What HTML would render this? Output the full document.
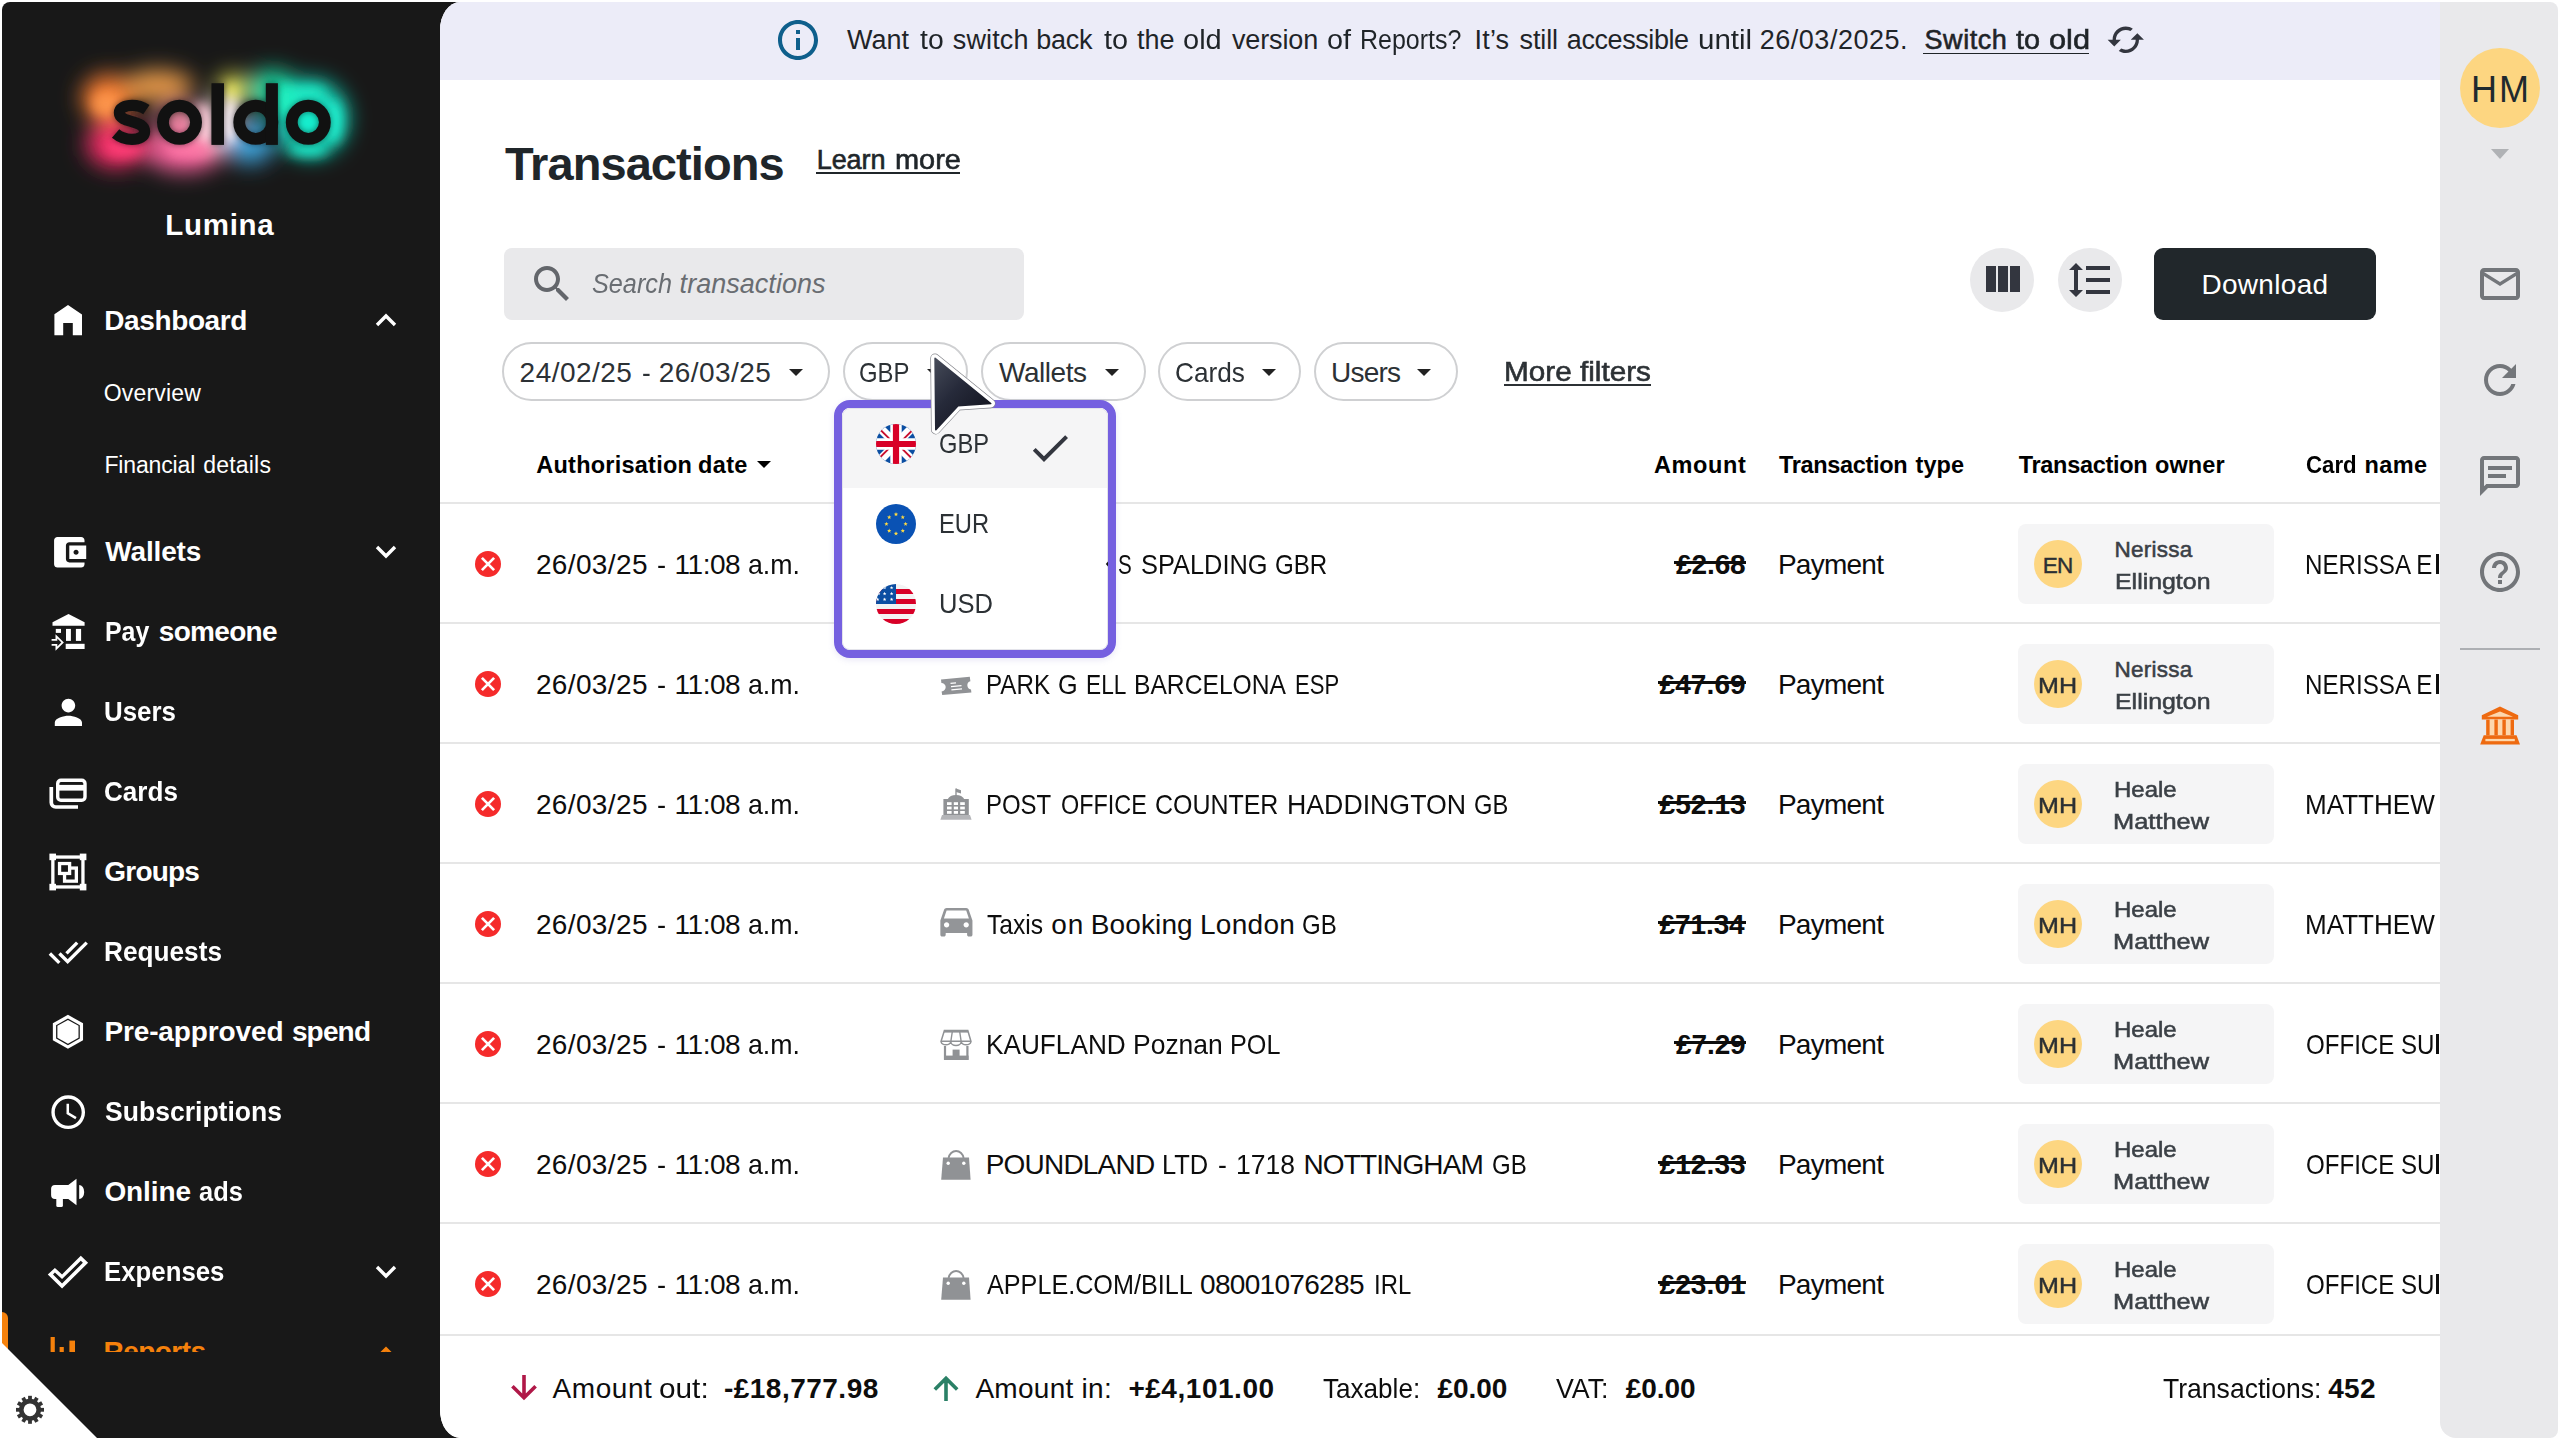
<!DOCTYPE html><html><head><meta charset="utf-8"><title>Transactions</title><style>
*{box-sizing:border-box;margin:0;padding:0}
html,body{width:2560px;height:1440px;overflow:hidden;background:#fff}
body{font-family:"Liberation Sans",sans-serif;position:relative;color:#111}
.t{position:absolute;white-space:pre}
.abs{position:absolute}
#side{position:absolute;left:2px;top:2px;width:470px;height:1436px;background:#181818;border-radius:8px 0 0 0;overflow:hidden}
#main{position:absolute;left:440px;top:2px;width:2000px;height:1436px;background:#fff;border-radius:20px 0 0 20px / 28px 0 0 28px;overflow:hidden}
#banner{position:absolute;left:0;top:0;width:2000px;height:78px;background:#ececf8}
#rail{position:absolute;left:2440px;top:2px;width:118px;height:1436px;background:#e9e9eb;border-radius:0 8px 8px 16px}
.hl{position:absolute;left:0;width:2000px;height:2px;background:#e6e6e6}
.chip{position:absolute;top:340.3px;height:59.2px;border:2px solid #cfd0d2;border-radius:30px;background:#fff}
.caret{position:absolute;width:0;height:0;border-left:7px solid transparent;border-right:7px solid transparent;border-top:7px solid #222}
.own{position:absolute;left:1578px;width:256px;height:80px;border-radius:8px;background:#f5f5f6}
.av{position:absolute;left:1594px;width:48px;height:48px;border-radius:50%;background:#fdd681}
.st{position:absolute;left:34px;width:28px;height:28px}
</style></head><body><div id="side"><svg class="abs" style="left:28px;top:18px" width="400" height="210" viewBox="30 20 400 210"><defs><filter id="lb" x="-30%" y="-30%" width="160%" height="160%"><feGaussianBlur stdDeviation="11"/></filter><filter id="ls" x="-30%" y="-30%" width="160%" height="160%"><feGaussianBlur stdDeviation="3"/></filter><filter id="lc" x="-50%" y="-50%" width="200%" height="200%"><feGaussianBlur stdDeviation="6"/></filter></defs><g filter="url(#lb)"><ellipse cx="108" cy="98" rx="26" ry="24" fill="#f57c30"/><ellipse cx="158" cy="86" rx="36" ry="16" fill="#e89a48"/><ellipse cx="116" cy="144" rx="30" ry="24" fill="#f02f66"/><ellipse cx="184" cy="150" rx="40" ry="22" fill="#f4609a"/><ellipse cx="180" cy="122" rx="22" ry="16" fill="#f58aa8"/><ellipse cx="220" cy="124" rx="18" ry="26" fill="#fde6ee"/><ellipse cx="232" cy="88" rx="14" ry="14" fill="#ecea50"/><ellipse cx="250" cy="142" rx="24" ry="22" fill="#3fa6de"/><ellipse cx="272" cy="90" rx="26" ry="20" fill="#1fd8a0"/><ellipse cx="311" cy="118" rx="36" ry="38" fill="#14eccc"/></g><g filter="url(#lc)" opacity="0.85"><ellipse cx="106" cy="104" rx="14" ry="12" fill="#ff9a50"/><ellipse cx="124" cy="148" rx="18" ry="10" fill="#ff3f78"/><ellipse cx="190" cy="150" rx="22" ry="8" fill="#ff7aa8"/><ellipse cx="200" cy="118" rx="8" ry="14" fill="#ffc0d0"/><ellipse cx="230" cy="120" rx="9" ry="22" fill="#fff4f8"/><ellipse cx="205" cy="124" rx="8" ry="16" fill="#ffd0dc"/><ellipse cx="232" cy="92" rx="7" ry="8" fill="#f4f060"/><ellipse cx="286" cy="100" rx="10" ry="16" fill="#20f0c0"/><ellipse cx="334" cy="122" rx="8" ry="22" fill="#20f4d4"/><ellipse cx="308" cy="150" rx="20" ry="6" fill="#20f4d4"/><ellipse cx="308" cy="92" rx="18" ry="6" fill="#20f0c8"/></g><g filter="url(#ls)" opacity="0.5"><g><path d="M146.4 109.6C142.6 107 137.6 105.3 132.2 105.3 124.6 105.3 119.4 108.2 119.4 112.8 119.4 118.2 125.4 119.8 132 121.6 138.6 123.4 144.6 125.4 144.6 131.4 144.6 136.4 139.6 139.4 132 139.4 125.6 139.4 119.8 137.2 115.6 133.6" fill="none" stroke="#111" stroke-width="11.2"/><circle cx="179.5" cy="122.3" r="16.55" fill="none" stroke="#111" stroke-width="11.9"/><rect x="211.4" y="83.2" width="12.6" height="61.7" fill="#111"/><circle cx="255.8" cy="122.3" r="16.55" fill="none" stroke="#111" stroke-width="11.9"/><rect x="265.8" y="83.2" width="12.1" height="61.7" fill="#111"/><circle cx="308.3" cy="122.3" r="16.55" fill="none" stroke="#111" stroke-width="11.9"/></g></g><g><path d="M146.4 109.6C142.6 107 137.6 105.3 132.2 105.3 124.6 105.3 119.4 108.2 119.4 112.8 119.4 118.2 125.4 119.8 132 121.6 138.6 123.4 144.6 125.4 144.6 131.4 144.6 136.4 139.6 139.4 132 139.4 125.6 139.4 119.8 137.2 115.6 133.6" fill="none" stroke="#111" stroke-width="11.2"/><circle cx="179.5" cy="122.3" r="16.55" fill="none" stroke="#111" stroke-width="11.9"/><rect x="211.4" y="83.2" width="12.6" height="61.7" fill="#111"/><circle cx="255.8" cy="122.3" r="16.55" fill="none" stroke="#111" stroke-width="11.9"/><rect x="265.8" y="83.2" width="12.1" height="61.7" fill="#111"/><circle cx="308.3" cy="122.3" r="16.55" fill="none" stroke="#111" stroke-width="11.9"/></g></svg>
<div class="t" style="top:207.75px;font-size:29.5px;line-height:29.5px;font-weight:700;color:#fff;letter-spacing:0.703px;left:163.25px;">Lumina</div>
<div class="t" style="top:305.00px;font-size:28px;line-height:28px;font-weight:700;color:#fff;letter-spacing:-0.393px;left:102.30px;">Dashboard</div>
<div class="t" style="top:536.00px;font-size:28px;line-height:28px;font-weight:700;color:#fff;letter-spacing:-0.153px;left:103.30px;">Wallets</div>
<div class="t" style="top:696.00px;font-size:28px;line-height:28px;font-weight:700;color:#fff;left:102.38px;transform:scaleX(0.9244);transform-origin:left center;">Users</div>
<div class="t" style="top:776.00px;font-size:28px;line-height:28px;font-weight:700;color:#fff;left:102.37px;transform:scaleX(0.9320);transform-origin:left center;">Cards</div>
<div class="t" style="top:856.00px;font-size:28px;line-height:28px;font-weight:700;color:#fff;letter-spacing:-0.797px;left:102.30px;">Groups</div>
<div class="t" style="top:936.00px;font-size:28px;line-height:28px;font-weight:700;color:#fff;left:102.36px;transform:scaleX(0.9360);transform-origin:left center;">Requests</div>
<div class="t" style="top:1096.00px;font-size:28px;line-height:28px;font-weight:700;color:#fff;left:103.30px;transform:scaleX(0.9483);transform-origin:left center;">Subscriptions</div>
<div class="t" style="top:1256.00px;font-size:28px;line-height:28px;font-weight:700;color:#fff;left:102.38px;transform:scaleX(0.9213);transform-origin:left center;">Expenses</div>
<div class="t" style="top:380.20px;font-size:23px;line-height:23px;color:#fff;letter-spacing:0.165px;left:101.80px;">Overview</div>
<div class="t" style="top:452.25px;font-size:23px;line-height:23px;color:#fff;letter-spacing:-0.142px;left:102.40px;">Financial</div><div class="t" style="top:452.25px;font-size:23px;line-height:23px;color:#fff;letter-spacing:0.186px;left:201.30px;">details</div>
<div class="t" style="top:616.00px;font-size:28px;line-height:28px;font-weight:700;color:#fff;left:102.51px;transform:scaleX(0.8894);transform-origin:left center;">Pay</div><div class="t" style="top:616.00px;font-size:28px;line-height:28px;font-weight:700;color:#fff;letter-spacing:-0.684px;left:156.75px;">someone</div>
<div class="t" style="top:1016.00px;font-size:28px;line-height:28px;font-weight:700;color:#fff;letter-spacing:-0.127px;left:102.40px;">Pre-approved</div><div class="t" style="top:1016.00px;font-size:28px;line-height:28px;font-weight:700;color:#fff;letter-spacing:-0.838px;left:289.90px;">spend</div>
<div class="t" style="top:1176.00px;font-size:28px;line-height:28px;font-weight:700;color:#fff;letter-spacing:-0.089px;left:102.40px;">Online</div><div class="t" style="top:1176.00px;font-size:28px;line-height:28px;font-weight:700;color:#fff;left:197.00px;transform:scaleX(0.9082);transform-origin:left center;">ads</div>
<div class="abs" style="left:0;top:1310px;width:438px;height:40px;overflow:hidden"><div class="t" style="top:26.00px;font-size:28px;line-height:28px;font-weight:700;color:#f5810c;letter-spacing:-0.537px;left:101.50px;">Reports</div><svg class="abs" style="left:46px;top:22px" width="36" height="36" viewBox="0 0 36 36"><rect x="2.6" y="3" width="4.2" height="33" fill="#f5810c"/><rect x="11.6" y="13" width="4.2" height="23" fill="#f5810c"/><rect x="21.4" y="6.6" width="5.6" height="30" fill="#f5810c"/></svg><svg class="abs" style="left:373px;top:34px" width="22" height="14" viewBox="0 0 22 14"><path d="M2 12l9-9 9 9" stroke="#f5810c" stroke-width="3.6" fill="none"/></svg></div>
<div class="abs" style="left:0;top:1310px;width:6px;height:40px;background:#f5810c;border-radius:0 6px 0 0"></div>
<svg class="abs" style="left:373px;top:311px" width="22" height="14" viewBox="0 0 22 14"><path d="M2 12l9-9 9 9" stroke="#fff" stroke-width="3.4" fill="none"/></svg>
<svg class="abs" style="left:373px;top:543px" width="22" height="14" viewBox="0 0 22 14"><path d="M2 2l9 9 9-9" stroke="#fff" stroke-width="3.4" fill="none"/></svg>
<svg class="abs" style="left:373px;top:1263px" width="22" height="14" viewBox="0 0 22 14"><path d="M2 2l9 9 9-9" stroke="#fff" stroke-width="3.4" fill="none"/></svg>
<svg class="abs" style="left:48px;top:298px" width="40" height="40" viewBox="50 300 40 40"><path d="M68 304.9L82 314.6V335.3H72.8V323.1H63.2V335.3H54.4V314.3z" fill="#fff"/></svg>
<svg class="abs" style="left:46.80px;top:529.80px" width="40.60" height="40.60" viewBox="0 0 24 24"><path d="M21 18v1c0 1.1-.9 2-2 2H5c-1.11 0-2-.9-2-2V5c0-1.1.89-2 2-2h14c1.1 0 2 .9 2 2v1h-9c-1.11 0-2 .9-2 2v8c0 1.1.89 2 2 2h9zm-9-2h10V8H12v8zm4-2.500c-.83 0-1.5-.67-1.5-1.500s.67-1.500 1.500-1.500 1.500.67 1.500 1.500-.67 1.500-1.500 1.500z" fill="#fff"/></svg>
<svg class="abs" style="left:46px;top:608px" width="42" height="44" viewBox="48 610 42 44"><path d="M52.5 622.3L68.5 614 84.6 622.3V625.8H52.5z" fill="#fff"/><rect x="55.8" y="628.9" width="5.2" height="4" fill="#fff"/><rect x="66" y="628.9" width="4.9" height="12" fill="#fff"/><rect x="75.9" y="628.9" width="5.2" height="12" fill="#fff"/><rect x="65.7" y="643.8" width="18.9" height="5.2" fill="#fff"/><path d="M51.6 639.9H56.4V636.4L62.6 642.4 56.4 648.6V644.8H51.6" stroke="#fff" stroke-width="1.8" fill="none"/></svg>
<svg class="abs" style="left:45.60px;top:690.00px" width="40.80" height="40.80" viewBox="0 0 24 24"><path d="M12 12c2.210 0 4-1.790 4-4s-1.790-4-4-4-4 1.790-4 4 1.790 4 4 4zm0 2c-2.670 0-8 1.340-8 4v2h16v-2c0-2.660-5.330-4-8-4z" fill="#fff"/></svg>
<svg class="abs" style="left:44px;top:772px" width="44" height="40" viewBox="46 774 44 40"><rect x="57.7" y="780.3" width="27.3" height="19.9" rx="3.2" fill="none" stroke="#fff" stroke-width="3.4"/><rect x="57.7" y="784.9" width="27.3" height="5.7" fill="#fff"/><path d="M51.3 787V802.6a4.4 4.4 0 0 0 4.4 4.4H78" fill="none" stroke="#fff" stroke-width="3.7"/></svg>
<svg class="abs" style="left:44px;top:848px" width="44" height="44" viewBox="46 850 44 44"><rect x="52.85" y="857.05" width="30.1" height="29.9" fill="none" stroke="#fff" stroke-width="3.3"/><rect x="49.4" y="853.6" width="6.6" height="6.6" fill="#fff"/><rect x="79.8" y="853.6" width="6.6" height="6.6" fill="#fff"/><rect x="49.4" y="883.8" width="6.6" height="6.6" fill="#fff"/><rect x="79.8" y="883.8" width="6.6" height="6.6" fill="#fff"/><rect x="64.55" y="868.05" width="11.8" height="13.1" fill="none" stroke="#fff" stroke-width="3.3"/><rect x="59.55" y="863.55" width="10.05" height="9.9" fill="#181818" stroke="#fff" stroke-width="3.3"/></svg>
<svg class="abs" style="left:46.20px;top:929.60px" width="40.50" height="40.50" viewBox="0 0 24 24"><path d="M18 7l-1.410-1.410-6.340 6.340 1.410 1.410L18 7zm4.240-1.410L11.660 16.170 7.480 12l-1.410 1.410L11.660 19l12-12-1.420-1.410zM.410 13.410L6 19l1.410-1.410L1.830 12 .410 13.410z" fill="#fff"/></svg>
<svg class="abs" style="left:46px;top:1008px" width="40" height="44" viewBox="48 1010 40 44"><polygon points="67.95,1014.80 83.05,1023.30 83.05,1040.30 67.95,1048.80 52.85,1040.30 52.85,1023.30" fill="#fff"/><polygon points="67.95,1018.45 79.80,1025.13 79.80,1038.47 67.95,1045.14 56.10,1038.47 56.10,1025.13" fill="#181818"/><polygon points="67.95,1019.90 78.52,1025.85 78.52,1037.75 67.95,1043.70 57.38,1037.75 57.38,1025.85" fill="#fff"/></svg>
<svg class="abs" style="left:45.80px;top:1089.60px" width="40.40" height="40.40" viewBox="0 0 24 24"><path d="M11.990 2C6.470 2 2 6.480 2 12s4.470 10 9.990 10C17.520 22 22 17.520 22 12S17.520 2 11.990 2zM12 20c-4.420 0-8-3.580-8-8s3.580-8 8-8 8 3.580 8 8-3.580 8-8 8zm.5-13H11v6l5.250 3.150.750-1.230-4.500-2.670z" fill="#fff"/></svg>
<svg class="abs" style="left:46px;top:1172px" width="40" height="38" viewBox="48 1174 40 38"><path d="M55 1184.9H68.3L76.5 1178.8V1205.2L68.3 1199H55a3.9 3.9 0 0 1-3.9-3.9V1188.8a3.9 3.9 0 0 1 3.9-3.9z" fill="#fff"/><rect x="56.3" y="1197" width="6.6" height="10" rx="1.6" fill="#fff"/><path d="M79.2 1185A5 7 0 0 1 79.2 1199z" fill="#fff"/></svg>
<svg class="abs" style="left:42px;top:1250px" width="48" height="40" viewBox="44 1252 48 40"><polygon points="47.8,1274.4 54.9,1268 62.05,1274.4 80.8,1255.85 88.1,1262.8 62.05,1288.5" fill="#fff"/><polygon points="53,1274.4 54.9,1272.5 62.05,1279.1 80.8,1260.7 82.9,1262.8 62.05,1283.5" fill="#181818"/></svg>
<svg class="abs" style="left:0;top:1341px" width="100" height="96" viewBox="0 0 100 96"><path d="M0 0L96 96H0z" fill="#fff"/></svg>
<svg class="abs" style="left:12px;top:1392px" width="32" height="32" viewBox="14 1394 32 32"><circle cx="30" cy="1409.8" r="8.7" fill="none" stroke="#333" stroke-width="4.6"/><rect x="28.1" y="1395.8" width="3.8" height="5.4" fill="#333" transform="rotate(0 30 1409.8)"/><rect x="28.1" y="1395.8" width="3.8" height="5.4" fill="#333" transform="rotate(30 30 1409.8)"/><rect x="28.1" y="1395.8" width="3.8" height="5.4" fill="#333" transform="rotate(60 30 1409.8)"/><rect x="28.1" y="1395.8" width="3.8" height="5.4" fill="#333" transform="rotate(90 30 1409.8)"/><rect x="28.1" y="1395.8" width="3.8" height="5.4" fill="#333" transform="rotate(120 30 1409.8)"/><rect x="28.1" y="1395.8" width="3.8" height="5.4" fill="#333" transform="rotate(150 30 1409.8)"/><rect x="28.1" y="1395.8" width="3.8" height="5.4" fill="#333" transform="rotate(180 30 1409.8)"/><rect x="28.1" y="1395.8" width="3.8" height="5.4" fill="#333" transform="rotate(210 30 1409.8)"/><rect x="28.1" y="1395.8" width="3.8" height="5.4" fill="#333" transform="rotate(240 30 1409.8)"/><rect x="28.1" y="1395.8" width="3.8" height="5.4" fill="#333" transform="rotate(270 30 1409.8)"/><rect x="28.1" y="1395.8" width="3.8" height="5.4" fill="#333" transform="rotate(300 30 1409.8)"/><rect x="28.1" y="1395.8" width="3.8" height="5.4" fill="#333" transform="rotate(330 30 1409.8)"/></svg></div><div id="main"><div id="banner"></div>
<div class="t" style="top:25.20px;font-size:27px;line-height:27px;color:#1f2428;left:407.00px;">Want</div><div class="t" style="top:25.20px;font-size:27px;line-height:27px;color:#1f2428;left:479.70px;transform:scaleX(1.0511);transform-origin:left center;">to</div><div class="t" style="top:25.20px;font-size:27px;line-height:27px;color:#1f2428;letter-spacing:0.140px;left:512.80px;">switch</div><div class="t" style="top:25.20px;font-size:27px;line-height:27px;color:#1f2428;letter-spacing:-0.244px;left:596.20px;">back</div><div class="t" style="top:25.20px;font-size:27px;line-height:27px;color:#1f2428;left:663.75px;transform:scaleX(1.0674);transform-origin:left center;">to</div><div class="t" style="top:25.20px;font-size:27px;line-height:27px;color:#1f2428;letter-spacing:0.091px;left:696.90px;">the</div><div class="t" style="top:25.20px;font-size:27px;line-height:27px;color:#1f2428;left:742.68px;transform:scaleX(1.0745);transform-origin:left center;">old</div><div class="t" style="top:25.20px;font-size:27px;line-height:27px;color:#1f2428;letter-spacing:-0.137px;left:792.00px;">version</div><div class="t" style="top:25.20px;font-size:27px;line-height:27px;color:#1f2428;left:887.03px;transform:scaleX(1.0674);transform-origin:left center;">of</div><div class="t" style="top:25.20px;font-size:27px;line-height:27px;color:#1f2428;left:919.85px;transform:scaleX(0.9257);transform-origin:left center;">Reports?</div><div class="t" style="top:25.20px;font-size:27px;line-height:27px;color:#1f2428;letter-spacing:0.162px;left:1034.60px;">It’s</div><div class="t" style="top:25.20px;font-size:27px;line-height:27px;color:#1f2428;letter-spacing:-0.125px;left:1079.50px;">still</div><div class="t" style="top:25.20px;font-size:27px;line-height:27px;color:#1f2428;letter-spacing:-0.416px;left:1126.80px;">accessible</div><div class="t" style="top:25.20px;font-size:27px;line-height:27px;color:#1f2428;left:1257.91px;transform:scaleX(1.0940);transform-origin:left center;">until</div><div class="t" style="top:25.20px;font-size:27px;line-height:27px;color:#1f2428;letter-spacing:0.507px;left:1319.80px;">26/03/2025.</div>
<div class="t" style="top:25.00px;font-size:27px;line-height:27px;color:#1f2428;letter-spacing:0.519px;-webkit-text-stroke:0.6px currentColor;left:1484.60px;">Switch</div><div class="t" style="top:25.00px;font-size:27px;line-height:27px;color:#1f2428;-webkit-text-stroke:0.6px currentColor;left:1575.90px;transform:scaleX(1.0697);transform-origin:left center;">to</div><div class="t" style="top:25.00px;font-size:27px;line-height:27px;color:#1f2428;-webkit-text-stroke:0.6px currentColor;left:1608.66px;transform:scaleX(1.1377);transform-origin:left center;">old</div><div class="abs" style="left:1483.2px;top:50.5px;width:165.7px;height:1.8px;background:#1f2428"></div>
<div class="t" style="top:137.50px;font-size:47px;line-height:47px;font-weight:700;color:#20262a;letter-spacing:-0.927px;left:64.90px;">Transactions</div>
<div class="t" style="top:144.90px;font-size:27px;line-height:27px;color:#20262a;letter-spacing:-0.097px;-webkit-text-stroke:0.6px currentColor;left:376.75px;">Learn</div><div class="t" style="top:144.90px;font-size:27px;line-height:27px;color:#20262a;-webkit-text-stroke:0.6px currentColor;left:454.83px;transform:scaleX(1.0723);transform-origin:left center;">more</div><div class="abs" style="left:376.4px;top:170.3px;width:143.8px;height:1.8px;background:#20262a"></div>
<div class="abs" style="left:64px;top:246px;width:520px;height:72px;border-radius:8px;background:#e9e9eb"></div>
<div class="t" style="top:269.00px;font-size:27px;line-height:27px;color:#696d72;font-style:italic;left:152.00px;transform:scaleX(0.9346);transform-origin:left center;">Search</div><div class="t" style="top:269.00px;font-size:27px;line-height:27px;color:#696d72;font-style:italic;letter-spacing:0.030px;left:239.60px;">transactions</div>
<div class="abs" style="left:1530px;top:246px;width:64px;height:64px;border-radius:50%;background:#e9e9eb"></div>
<div class="abs" style="left:1618px;top:246px;width:64px;height:64px;border-radius:50%;background:#e9e9eb"></div>
<div class="abs" style="left:1714px;top:246px;width:222px;height:72px;border-radius:9px;background:#21272b"></div>
<div class="t" style="top:268.60px;font-size:28px;line-height:28px;color:#fff;letter-spacing:0.321px;left:1761.40px;">Download</div>
<div class="chip" style="left:62.4px;width:327.3px"></div>
<div class="t" style="top:356.50px;font-size:28px;line-height:28px;color:#2c3135;letter-spacing:0.461px;left:79.60px;">24/02/25</div><div class="t" style="top:356.50px;font-size:28px;line-height:28px;color:#2c3135;left:201.56px;transform:scaleX(0.9375);transform-origin:left center;">-</div><div class="t" style="top:356.50px;font-size:28px;line-height:28px;color:#2c3135;letter-spacing:0.454px;left:218.70px;">26/03/25</div>
<div class="caret" style="left:349px;top:367px"></div>
<div class="chip" style="left:403.0px;width:124.5px"></div>
<div class="t" style="top:356.50px;font-size:28px;line-height:28px;color:#2c3135;left:419.15px;transform:scaleX(0.8528);transform-origin:left center;">GBP</div>
<div class="caret" style="left:487px;top:367px"></div>
<div class="chip" style="left:540.6px;width:165.0px"></div>
<div class="t" style="top:356.50px;font-size:28px;line-height:28px;color:#2c3135;letter-spacing:-0.459px;left:559.00px;">Wallets</div>
<div class="caret" style="left:665px;top:367px"></div>
<div class="chip" style="left:718.0px;width:143.0px"></div>
<div class="t" style="top:356.50px;font-size:28px;line-height:28px;color:#2c3135;left:735.06px;transform:scaleX(0.9355);transform-origin:left center;">Cards</div>
<div class="caret" style="left:822px;top:367px"></div>
<div class="chip" style="left:873.7px;width:143.9px"></div>
<div class="t" style="top:356.50px;font-size:28px;line-height:28px;color:#2c3135;letter-spacing:-0.779px;left:891.00px;">Users</div>
<div class="caret" style="left:977px;top:367px"></div>
<div class="t" style="top:357.10px;font-size:27px;line-height:27px;color:#2c3135;-webkit-text-stroke:0.6px currentColor;left:1064.30px;transform:scaleX(1.1009);transform-origin:left center;">More</div><div class="t" style="top:357.10px;font-size:27px;line-height:27px;color:#2c3135;-webkit-text-stroke:0.6px currentColor;left:1140.40px;transform:scaleX(1.0983);transform-origin:left center;">filters</div><div class="abs" style="left:1064.1px;top:382.4px;width:147.0px;height:1.8px;background:#2c3135"></div>
<svg class="abs" style="left:334.00px;top:14.00px" width="48.00" height="48.00" viewBox="0 0 24 24"><path d="M11 17h2v-6h-2v6zm1-15C6.480 2 2 6.480 2 12s4.480 10 10 10 10-4.480 10-10S17.520 2 12 2zm0 18c-4.410 0-8-3.590-8-8s3.590-8 8-8 8 3.590 8 8-3.590 8-8 8zM11 9h2V7h-2v2z" fill="#0e5f8c"/></svg>
<svg class="abs" style="left:1666.20px;top:18.10px" width="39.60" height="39.60" viewBox="0 0 24 24"><path d="M19 8l-4 4h3c0 3.310-2.690 6-6 6-1.010 0-1.970-.25-2.800-.7l-1.460 1.460C8.970 19.540 10.430 20 12 20c4.420 0 8-3.580 8-8h3l-4-4zM6 12c0-3.310 2.690-6 6-6 1.010 0 1.970.25 2.800.7l1.460-1.460C15.030 4.460 13.570 4 12 4c-4.420 0-8 3.580-8 8H1l4 4 4-4H6z" fill="#33363f"/></svg>
<svg class="abs" style="left:88.00px;top:258.00px" width="48.00" height="48.00" viewBox="0 0 24 24"><path d="M15.500 14h-.79l-.28-.27C15.410 12.590 16 11.110 16 9.500 16 5.910 13.090 3 9.500 3S3 5.910 3 9.500 5.910 16 9.500 16c1.610 0 3.090-.59 4.230-1.570l.27.28v.79l5 4.990L20.490 19l-4.990-5zm-6 0C7.010 14 5 11.990 5 9.500S7.010 5 9.500 5 14 7.010 14 9.500 11.990 14 9.500 14z" fill="#63666b"/></svg>
<svg class="abs" style="left:1537.50px;top:254.00px" width="48.00" height="48.00" viewBox="0 0 24 24"><path d="M10 18h5V5h-5v13zm-6 0h5V5H4v13zM16 5v13h5V5h-5z" fill="#33363f"/></svg>
<svg class="abs" style="left:1626.00px;top:254.40px" width="48.00" height="48.00" viewBox="0 0 24 24"><path d="M6 7h2.500L5 3.500 1.500 7H4v10H1.500L5 20.500 8.500 17H6V7zm4-2v2h12V5H10zm0 14h12v-2H10v2zm0-6h12v-2H10v2z" fill="#33363f"/></svg>
<div class="t" style="top:451.75px;font-size:23.5px;line-height:23.5px;font-weight:700;color:#000;letter-spacing:0.235px;left:96.30px;">Authorisation</div><div class="t" style="top:451.75px;font-size:23.5px;line-height:23.5px;font-weight:700;color:#000;letter-spacing:0.317px;left:258.10px;">date</div>
<div class="caret" style="left:317px;top:459px;border-top-color:#000"></div>
<div class="t" style="top:451.75px;font-size:23.5px;line-height:23.5px;font-weight:700;color:#000;letter-spacing:0.614px;right:693.56px;">Amount</div>
<div class="t" style="top:451.75px;font-size:23.5px;line-height:23.5px;font-weight:700;color:#000;letter-spacing:-0.330px;left:1339.00px;">Transaction</div><div class="t" style="top:451.75px;font-size:23.5px;line-height:23.5px;font-weight:700;color:#000;letter-spacing:0.050px;left:1475.60px;">type</div>
<div class="t" style="top:451.75px;font-size:23.5px;line-height:23.5px;font-weight:700;color:#000;letter-spacing:-0.305px;left:1578.75px;">Transaction</div><div class="t" style="top:451.75px;font-size:23.5px;line-height:23.5px;font-weight:700;color:#000;letter-spacing:0.085px;left:1715.00px;">owner</div>
<div class="t" style="top:451.75px;font-size:23.5px;line-height:23.5px;font-weight:700;color:#000;left:1866.25px;transform:scaleX(0.9457);transform-origin:left center;">Card</div><div class="t" style="top:451.75px;font-size:23.5px;line-height:23.5px;font-weight:700;color:#000;letter-spacing:0.327px;left:1924.60px;">name</div>
<div class="hl" style="top:500px"></div>
<svg class="st" style="top:548px" viewBox="0 0 28 28"><circle cx="14" cy="14" r="13" fill="#f52b2b"/><path d="M7.9 7.9l12.2 12.2M20.1 7.9l-12.2 12.2" stroke="#fff" stroke-width="2.7"/></svg>
<div class="t" style="top:548.50px;font-size:28px;line-height:28px;color:#0d0d0d;letter-spacing:0.369px;left:95.90px;">26/03/25</div><div class="t" style="top:548.50px;font-size:28px;line-height:28px;color:#0d0d0d;left:216.82px;transform:scaleX(0.9750);transform-origin:left center;">-</div><div class="t" style="top:548.50px;font-size:28px;line-height:28px;color:#0d0d0d;letter-spacing:-0.504px;left:234.60px;">11:08</div><div class="t" style="top:548.50px;font-size:28px;line-height:28px;color:#0d0d0d;left:308.45px;transform:scaleX(0.9550);transform-origin:left center;">a.m.</div>
<div class="t" style="top:548.50px;font-size:28px;line-height:28px;color:#0d0d0d;left:678.16px;transform:scaleX(0.7353);transform-origin:left center;">S</div><div class="t" style="top:548.50px;font-size:28px;line-height:28px;color:#0d0d0d;left:700.59px;transform:scaleX(0.9068);transform-origin:left center;">SPALDING</div><div class="t" style="top:548.50px;font-size:28px;line-height:28px;color:#0d0d0d;left:834.94px;transform:scaleX(0.8605);transform-origin:left center;">GBR</div>
<div class="t" style="top:548.50px;font-size:28px;line-height:28px;font-weight:700;color:#0d0d0d;letter-spacing:-0.099px;right:694.43px;">£2.68</div>
<div class="abs" style="left:1234.2px;top:558.9px;width:71.8px;height:2.7px;background:#0d0d0d"></div>
<div class="t" style="top:548.50px;font-size:28px;line-height:28px;color:#0d0d0d;letter-spacing:-0.736px;left:1337.90px;">Payment</div>
<div class="own" style="top:522px"></div><div class="av" style="top:538px"></div>
<div class="t" style="top:552.65px;font-size:22.5px;line-height:22.5px;color:#2b2f33;letter-spacing:-0.757px;-webkit-text-stroke:0.4px currentColor;left:1602.75px;">EN</div>
<div class="t" style="top:536.75px;font-size:22.5px;line-height:22.5px;color:#3b4046;letter-spacing:0.258px;-webkit-text-stroke:0.55px currentColor;left:1674.40px;">Nerissa</div>
<div class="t" style="top:569.05px;font-size:22.5px;line-height:22.5px;color:#3b4046;-webkit-text-stroke:0.55px currentColor;left:1674.59px;transform:scaleX(1.1062);transform-origin:left center;">Ellington</div>
<div class="t" style="top:548.50px;font-size:28px;line-height:28px;color:#0d0d0d;left:1864.78px;transform:scaleX(0.8623);transform-origin:left center;">NERISSA E</div>
<div class="abs" style="left:1996.3px;top:552px;width:2.6px;height:20px;background:#0d0d0d"></div>
<div class="hl" style="top:620px"></div>
<svg class="st" style="top:668px" viewBox="0 0 28 28"><circle cx="14" cy="14" r="13" fill="#f52b2b"/><path d="M7.9 7.9l12.2 12.2M20.1 7.9l-12.2 12.2" stroke="#fff" stroke-width="2.7"/></svg>
<div class="t" style="top:668.50px;font-size:28px;line-height:28px;color:#0d0d0d;letter-spacing:0.369px;left:95.90px;">26/03/25</div><div class="t" style="top:668.50px;font-size:28px;line-height:28px;color:#0d0d0d;left:216.82px;transform:scaleX(0.9750);transform-origin:left center;">-</div><div class="t" style="top:668.50px;font-size:28px;line-height:28px;color:#0d0d0d;letter-spacing:-0.504px;left:234.60px;">11:08</div><div class="t" style="top:668.50px;font-size:28px;line-height:28px;color:#0d0d0d;left:308.45px;transform:scaleX(0.9550);transform-origin:left center;">a.m.</div>
<svg class="abs" style="left:496px;top:668px" width="40" height="28" viewBox="936 670 40 28"><g transform="translate(0 0)"><path d="M941 679.5L969.8 676.8 970.4 681.2A4.2 4.2 0 0 0 971 689.4L971.4 692.4 942.2 695 941.6 691.4A4.2 4.2 0 0 0 941.4 683z" fill="#909295"/><path d="M950.5 683.4L956 682.9M951 686.6L961.5 685.6M951.4 689.8L962 688.8" stroke="#fff" stroke-width="1.3"/></g></svg>
<div class="t" style="top:668.50px;font-size:28px;line-height:28px;color:#0d0d0d;left:545.97px;transform:scaleX(0.8649);transform-origin:left center;">PARK</div><div class="t" style="top:668.50px;font-size:28px;line-height:28px;color:#0d0d0d;left:618.30px;transform:scaleX(0.9000);transform-origin:left center;">G</div><div class="t" style="top:668.50px;font-size:28px;line-height:28px;color:#0d0d0d;left:645.58px;transform:scaleX(0.8106);transform-origin:left center;">ELL</div><div class="t" style="top:668.50px;font-size:28px;line-height:28px;color:#0d0d0d;left:694.04px;transform:scaleX(0.8799);transform-origin:left center;">BARCELONA</div><div class="t" style="top:668.50px;font-size:28px;line-height:28px;color:#0d0d0d;left:855.23px;transform:scaleX(0.7872);transform-origin:left center;">ESP</div>
<div class="t" style="top:668.50px;font-size:28px;line-height:28px;font-weight:700;color:#0d0d0d;letter-spacing:0.106px;right:694.22px;">£47.69</div>
<div class="abs" style="left:1217.7px;top:678.9px;width:88.3px;height:2.7px;background:#0d0d0d"></div>
<div class="t" style="top:668.50px;font-size:28px;line-height:28px;color:#0d0d0d;letter-spacing:-0.736px;left:1337.90px;">Payment</div>
<div class="own" style="top:642px"></div><div class="av" style="top:658px"></div>
<div class="t" style="top:672.65px;font-size:22.5px;line-height:22.5px;color:#2b2f33;-webkit-text-stroke:0.4px currentColor;left:1598.39px;transform:scaleX(1.1148);transform-origin:left center;">MH</div>
<div class="t" style="top:656.75px;font-size:22.5px;line-height:22.5px;color:#3b4046;letter-spacing:0.258px;-webkit-text-stroke:0.55px currentColor;left:1674.40px;">Nerissa</div>
<div class="t" style="top:689.05px;font-size:22.5px;line-height:22.5px;color:#3b4046;-webkit-text-stroke:0.55px currentColor;left:1674.59px;transform:scaleX(1.1062);transform-origin:left center;">Ellington</div>
<div class="t" style="top:668.50px;font-size:28px;line-height:28px;color:#0d0d0d;left:1864.78px;transform:scaleX(0.8623);transform-origin:left center;">NERISSA E</div>
<div class="abs" style="left:1996.3px;top:672px;width:2.6px;height:20px;background:#0d0d0d"></div>
<div class="hl" style="top:740px"></div>
<svg class="st" style="top:788px" viewBox="0 0 28 28"><circle cx="14" cy="14" r="13" fill="#f52b2b"/><path d="M7.9 7.9l12.2 12.2M20.1 7.9l-12.2 12.2" stroke="#fff" stroke-width="2.7"/></svg>
<div class="t" style="top:788.50px;font-size:28px;line-height:28px;color:#0d0d0d;letter-spacing:0.369px;left:95.90px;">26/03/25</div><div class="t" style="top:788.50px;font-size:28px;line-height:28px;color:#0d0d0d;left:216.82px;transform:scaleX(0.9750);transform-origin:left center;">-</div><div class="t" style="top:788.50px;font-size:28px;line-height:28px;color:#0d0d0d;letter-spacing:-0.504px;left:234.60px;">11:08</div><div class="t" style="top:788.50px;font-size:28px;line-height:28px;color:#0d0d0d;left:308.45px;transform:scaleX(0.9550);transform-origin:left center;">a.m.</div>
<svg class="abs" style="left:496px;top:784px" width="40" height="36" viewBox="936 786 40 36"><g transform="translate(0 0)"><path d="M956 788.4V797" stroke="#909295" stroke-width="1.4"/><path d="M956 788.6L961 790.2V793.4L956 792z" fill="#909295"/><path d="M947.5 799.5A9.3 7.5 0 0 1 964.5 799.5z" fill="#909295"/><rect x="943.4" y="799" width="25.4" height="16" fill="#909295"/><g fill="#fff"><rect x="947" y="802.2" width="4.6" height="2.8"/><rect x="953.8" y="802.2" width="4.2" height="2.8"/><rect x="960.2" y="802.2" width="4.6" height="2.8"/><rect x="947" y="806.6" width="4.6" height="2.8"/><rect x="953.8" y="806.6" width="4.2" height="2.8"/><rect x="960.2" y="806.6" width="4.6" height="2.8"/><rect x="947" y="811" width="4.6" height="2.8"/><rect x="953.8" y="811" width="4.2" height="2.8"/><rect x="960.2" y="811" width="4.6" height="2.8"/></g><path d="M942 815H970L971.6 819.8H940.4z" fill="#b4b5b8"/></g></svg>
<div class="t" style="top:788.50px;font-size:28px;line-height:28px;color:#0d0d0d;left:545.99px;transform:scaleX(0.8552);transform-origin:left center;">POST</div><div class="t" style="top:788.50px;font-size:28px;line-height:28px;color:#0d0d0d;left:620.56px;transform:scaleX(0.8358);transform-origin:left center;">OFFICE</div><div class="t" style="top:788.50px;font-size:28px;line-height:28px;color:#0d0d0d;left:715.21px;transform:scaleX(0.8912);transform-origin:left center;">COUNTER</div><div class="t" style="top:788.50px;font-size:28px;line-height:28px;color:#0d0d0d;left:846.59px;transform:scaleX(0.9537);transform-origin:left center;">HADDINGTON</div><div class="t" style="top:788.50px;font-size:28px;line-height:28px;color:#0d0d0d;left:1034.05px;transform:scaleX(0.8458);transform-origin:left center;">GB</div>
<div class="t" style="top:788.50px;font-size:28px;line-height:28px;font-weight:700;color:#0d0d0d;letter-spacing:0.106px;right:694.22px;">£52.13</div>
<div class="abs" style="left:1217.7px;top:798.9px;width:88.3px;height:2.7px;background:#0d0d0d"></div>
<div class="t" style="top:788.50px;font-size:28px;line-height:28px;color:#0d0d0d;letter-spacing:-0.736px;left:1337.90px;">Payment</div>
<div class="own" style="top:762px"></div><div class="av" style="top:778px"></div>
<div class="t" style="top:792.65px;font-size:22.5px;line-height:22.5px;color:#2b2f33;-webkit-text-stroke:0.4px currentColor;left:1598.39px;transform:scaleX(1.1148);transform-origin:left center;">MH</div>
<div class="t" style="top:776.75px;font-size:22.5px;line-height:22.5px;color:#3b4046;-webkit-text-stroke:0.55px currentColor;left:1673.53px;transform:scaleX(1.0650);transform-origin:left center;">Heale</div>
<div class="t" style="top:809.05px;font-size:22.5px;line-height:22.5px;color:#3b4046;-webkit-text-stroke:0.55px currentColor;left:1673.47px;transform:scaleX(1.1299);transform-origin:left center;">Matthew</div>
<div class="t" style="top:788.50px;font-size:28px;line-height:28px;color:#0d0d0d;left:1864.64px;transform:scaleX(0.9310);transform-origin:left center;">MATTHEW</div>
<div class="hl" style="top:860px"></div>
<svg class="st" style="top:908px" viewBox="0 0 28 28"><circle cx="14" cy="14" r="13" fill="#f52b2b"/><path d="M7.9 7.9l12.2 12.2M20.1 7.9l-12.2 12.2" stroke="#fff" stroke-width="2.7"/></svg>
<div class="t" style="top:908.50px;font-size:28px;line-height:28px;color:#0d0d0d;letter-spacing:0.369px;left:95.90px;">26/03/25</div><div class="t" style="top:908.50px;font-size:28px;line-height:28px;color:#0d0d0d;left:216.82px;transform:scaleX(0.9750);transform-origin:left center;">-</div><div class="t" style="top:908.50px;font-size:28px;line-height:28px;color:#0d0d0d;letter-spacing:-0.504px;left:234.60px;">11:08</div><div class="t" style="top:908.50px;font-size:28px;line-height:28px;color:#0d0d0d;left:308.45px;transform:scaleX(0.9550);transform-origin:left center;">a.m.</div>
<svg class="abs" style="left:494.60px;top:897.30px" width="42.80" height="42.80" viewBox="0 0 24 24"><path d="M18.920 6.010C18.720 5.420 18.160 5 17.500 5h-11c-.66 0-1.210.42-1.420 1.010L3 12v8c0 .55.45 1 1 1h1c.55 0 1-.45 1-1v-1h12v1c0 .55.45 1 1 1h1c.55 0 1-.45 1-1v-8l-2.080-5.990zM6.500 16c-.83 0-1.500-.67-1.500-1.500S5.670 13 6.500 13s1.500.67 1.500 1.500S7.330 16 6.500 16zm11 0c-.83 0-1.500-.67-1.500-1.500s.67-1.500 1.500-1.500 1.500.67 1.500 1.500-.67 1.500-1.500 1.500zM5 11l1.500-4.500h11L19 11H5z" fill="#939598"/></svg>
<div class="t" style="top:908.50px;font-size:28px;line-height:28px;color:#0d0d0d;left:546.60px;transform:scaleX(0.8807);transform-origin:left center;">Taxis</div><div class="t" style="top:908.50px;font-size:28px;line-height:28px;color:#0d0d0d;letter-spacing:0.928px;left:611.20px;">on</div><div class="t" style="top:908.50px;font-size:28px;line-height:28px;color:#0d0d0d;letter-spacing:0.131px;left:650.70px;">Booking</div><div class="t" style="top:908.50px;font-size:28px;line-height:28px;color:#0d0d0d;letter-spacing:0.288px;left:760.00px;">London</div><div class="t" style="top:908.50px;font-size:28px;line-height:28px;color:#0d0d0d;left:862.44px;transform:scaleX(0.8587);transform-origin:left center;">GB</div>
<div class="t" style="top:908.50px;font-size:28px;line-height:28px;font-weight:700;color:#0d0d0d;letter-spacing:-0.094px;right:695.42px;">£71.34</div>
<div class="abs" style="left:1217.7px;top:918.9px;width:88.3px;height:2.7px;background:#0d0d0d"></div>
<div class="t" style="top:908.50px;font-size:28px;line-height:28px;color:#0d0d0d;letter-spacing:-0.736px;left:1337.90px;">Payment</div>
<div class="own" style="top:882px"></div><div class="av" style="top:898px"></div>
<div class="t" style="top:912.65px;font-size:22.5px;line-height:22.5px;color:#2b2f33;-webkit-text-stroke:0.4px currentColor;left:1598.39px;transform:scaleX(1.1148);transform-origin:left center;">MH</div>
<div class="t" style="top:896.75px;font-size:22.5px;line-height:22.5px;color:#3b4046;-webkit-text-stroke:0.55px currentColor;left:1673.53px;transform:scaleX(1.0650);transform-origin:left center;">Heale</div>
<div class="t" style="top:929.05px;font-size:22.5px;line-height:22.5px;color:#3b4046;-webkit-text-stroke:0.55px currentColor;left:1673.47px;transform:scaleX(1.1299);transform-origin:left center;">Matthew</div>
<div class="t" style="top:908.50px;font-size:28px;line-height:28px;color:#0d0d0d;left:1864.64px;transform:scaleX(0.9310);transform-origin:left center;">MATTHEW</div>
<div class="hl" style="top:980px"></div>
<svg class="st" style="top:1028px" viewBox="0 0 28 28"><circle cx="14" cy="14" r="13" fill="#f52b2b"/><path d="M7.9 7.9l12.2 12.2M20.1 7.9l-12.2 12.2" stroke="#fff" stroke-width="2.7"/></svg>
<div class="t" style="top:1028.50px;font-size:28px;line-height:28px;color:#0d0d0d;letter-spacing:0.369px;left:95.90px;">26/03/25</div><div class="t" style="top:1028.50px;font-size:28px;line-height:28px;color:#0d0d0d;left:216.82px;transform:scaleX(0.9750);transform-origin:left center;">-</div><div class="t" style="top:1028.50px;font-size:28px;line-height:28px;color:#0d0d0d;letter-spacing:-0.504px;left:234.60px;">11:08</div><div class="t" style="top:1028.50px;font-size:28px;line-height:28px;color:#0d0d0d;left:308.45px;transform:scaleX(0.9550);transform-origin:left center;">a.m.</div>
<svg class="abs" style="left:496px;top:1024px" width="40" height="36" viewBox="936 1026 40 36"><g transform="translate(0 0)"><path d="M944.4 1030.6H967.8L971 1041.6A5 4 0 0 1 961.2 1041.6A5.2 4 0 0 1 950.8 1041.6A5 4 0 0 1 941 1041.6z" fill="#fff" stroke="#909295" stroke-width="1.5"/><path d="M944 1031.4H968" stroke="#909295" stroke-width="2.4"/><path d="M952.4 1031L950.8 1041.6M959.6 1031L961.2 1041.6M941 1041.2H971" stroke="#909295" stroke-width="1.4" fill="none"/><path d="M945 1046V1058.6H967.4V1046" fill="none" stroke="#909295" stroke-width="2.2"/><rect x="944" y="1055.6" width="24.6" height="4.4" fill="#909295"/><rect x="952.6" y="1049.6" width="7" height="8" fill="#909295"/></g></svg>
<div class="t" style="top:1028.50px;font-size:28px;line-height:28px;color:#0d0d0d;left:545.83px;transform:scaleX(0.9354);transform-origin:left center;">KAUFLAND</div><div class="t" style="top:1028.50px;font-size:28px;line-height:28px;color:#0d0d0d;left:693.01px;transform:scaleX(0.9454);transform-origin:left center;">Poznan</div><div class="t" style="top:1028.50px;font-size:28px;line-height:28px;color:#0d0d0d;left:789.80px;transform:scaleX(0.8998);transform-origin:left center;">POL</div>
<div class="t" style="top:1028.50px;font-size:28px;line-height:28px;font-weight:700;color:#0d0d0d;letter-spacing:-0.099px;right:694.43px;">£7.29</div>
<div class="abs" style="left:1234.2px;top:1038.9px;width:71.8px;height:2.7px;background:#0d0d0d"></div>
<div class="t" style="top:1028.50px;font-size:28px;line-height:28px;color:#0d0d0d;letter-spacing:-0.736px;left:1337.90px;">Payment</div>
<div class="own" style="top:1002px"></div><div class="av" style="top:1018px"></div>
<div class="t" style="top:1032.65px;font-size:22.5px;line-height:22.5px;color:#2b2f33;-webkit-text-stroke:0.4px currentColor;left:1598.39px;transform:scaleX(1.1148);transform-origin:left center;">MH</div>
<div class="t" style="top:1016.75px;font-size:22.5px;line-height:22.5px;color:#3b4046;-webkit-text-stroke:0.55px currentColor;left:1673.53px;transform:scaleX(1.0650);transform-origin:left center;">Heale</div>
<div class="t" style="top:1049.05px;font-size:22.5px;line-height:22.5px;color:#3b4046;-webkit-text-stroke:0.55px currentColor;left:1673.47px;transform:scaleX(1.1299);transform-origin:left center;">Matthew</div>
<div class="t" style="top:1028.50px;font-size:28px;line-height:28px;color:#0d0d0d;left:1865.64px;transform:scaleX(0.8599);transform-origin:left center;">OFFICE SU</div>
<div class="abs" style="left:1996.3px;top:1032px;width:2.6px;height:20px;background:#0d0d0d"></div>
<div class="hl" style="top:1100px"></div>
<svg class="st" style="top:1148px" viewBox="0 0 28 28"><circle cx="14" cy="14" r="13" fill="#f52b2b"/><path d="M7.9 7.9l12.2 12.2M20.1 7.9l-12.2 12.2" stroke="#fff" stroke-width="2.7"/></svg>
<div class="t" style="top:1148.50px;font-size:28px;line-height:28px;color:#0d0d0d;letter-spacing:0.369px;left:95.90px;">26/03/25</div><div class="t" style="top:1148.50px;font-size:28px;line-height:28px;color:#0d0d0d;left:216.82px;transform:scaleX(0.9750);transform-origin:left center;">-</div><div class="t" style="top:1148.50px;font-size:28px;line-height:28px;color:#0d0d0d;letter-spacing:-0.504px;left:234.60px;">11:08</div><div class="t" style="top:1148.50px;font-size:28px;line-height:28px;color:#0d0d0d;left:308.45px;transform:scaleX(0.9550);transform-origin:left center;">a.m.</div>
<svg class="abs" style="left:496px;top:1144px" width="40" height="36" viewBox="936 1146 40 36"><g transform="translate(0 0)"><path d="M948.6 1158A7.6 8.4 0 0 1 963.6 1158" fill="none" stroke="#909295" stroke-width="1.9"/><path d="M943 1157.4H969L970.6 1179.8H941.2z" fill="#909295"/><circle cx="948.2" cy="1163.3" r="1.7" fill="#fff"/><circle cx="963.8" cy="1163.3" r="1.7" fill="#fff"/></g></svg>
<div class="t" style="top:1148.50px;font-size:28px;line-height:28px;color:#0d0d0d;letter-spacing:-0.798px;left:545.70px;">POUNDLAND</div><div class="t" style="top:1148.50px;font-size:28px;line-height:28px;color:#0d0d0d;left:722.38px;transform:scaleX(0.9097);transform-origin:left center;">LTD</div><div class="t" style="top:1148.50px;font-size:28px;line-height:28px;color:#0d0d0d;left:777.55px;transform:scaleX(0.9500);transform-origin:left center;">-</div><div class="t" style="top:1148.50px;font-size:28px;line-height:28px;color:#0d0d0d;left:796.21px;transform:scaleX(0.9461);transform-origin:left center;">1718</div><div class="t" style="top:1148.50px;font-size:28px;line-height:28px;color:#0d0d0d;letter-spacing:-0.876px;left:863.50px;">NOTTINGHAM</div><div class="t" style="top:1148.50px;font-size:28px;line-height:28px;color:#0d0d0d;left:1052.14px;transform:scaleX(0.8587);transform-origin:left center;">GB</div>
<div class="t" style="top:1148.50px;font-size:28px;line-height:28px;font-weight:700;color:#0d0d0d;letter-spacing:0.106px;right:694.22px;">£12.33</div>
<div class="abs" style="left:1217.7px;top:1158.9px;width:88.3px;height:2.7px;background:#0d0d0d"></div>
<div class="t" style="top:1148.50px;font-size:28px;line-height:28px;color:#0d0d0d;letter-spacing:-0.736px;left:1337.90px;">Payment</div>
<div class="own" style="top:1122px"></div><div class="av" style="top:1138px"></div>
<div class="t" style="top:1152.65px;font-size:22.5px;line-height:22.5px;color:#2b2f33;-webkit-text-stroke:0.4px currentColor;left:1598.39px;transform:scaleX(1.1148);transform-origin:left center;">MH</div>
<div class="t" style="top:1136.75px;font-size:22.5px;line-height:22.5px;color:#3b4046;-webkit-text-stroke:0.55px currentColor;left:1673.53px;transform:scaleX(1.0650);transform-origin:left center;">Heale</div>
<div class="t" style="top:1169.05px;font-size:22.5px;line-height:22.5px;color:#3b4046;-webkit-text-stroke:0.55px currentColor;left:1673.47px;transform:scaleX(1.1299);transform-origin:left center;">Matthew</div>
<div class="t" style="top:1148.50px;font-size:28px;line-height:28px;color:#0d0d0d;left:1865.64px;transform:scaleX(0.8599);transform-origin:left center;">OFFICE SU</div>
<div class="abs" style="left:1996.3px;top:1152px;width:2.6px;height:20px;background:#0d0d0d"></div>
<div class="hl" style="top:1220px"></div>
<svg class="st" style="top:1268px" viewBox="0 0 28 28"><circle cx="14" cy="14" r="13" fill="#f52b2b"/><path d="M7.9 7.9l12.2 12.2M20.1 7.9l-12.2 12.2" stroke="#fff" stroke-width="2.7"/></svg>
<div class="t" style="top:1268.50px;font-size:28px;line-height:28px;color:#0d0d0d;letter-spacing:0.369px;left:95.90px;">26/03/25</div><div class="t" style="top:1268.50px;font-size:28px;line-height:28px;color:#0d0d0d;left:216.82px;transform:scaleX(0.9750);transform-origin:left center;">-</div><div class="t" style="top:1268.50px;font-size:28px;line-height:28px;color:#0d0d0d;letter-spacing:-0.504px;left:234.60px;">11:08</div><div class="t" style="top:1268.50px;font-size:28px;line-height:28px;color:#0d0d0d;left:308.45px;transform:scaleX(0.9550);transform-origin:left center;">a.m.</div>
<svg class="abs" style="left:496px;top:1264px" width="40" height="36" viewBox="936 1266 40 36"><g transform="translate(0 120)"><path d="M948.6 1158A7.6 8.4 0 0 1 963.6 1158" fill="none" stroke="#909295" stroke-width="1.9"/><path d="M943 1157.4H969L970.6 1179.8H941.2z" fill="#909295"/><circle cx="948.2" cy="1163.3" r="1.7" fill="#fff"/><circle cx="963.8" cy="1163.3" r="1.7" fill="#fff"/></g></svg>
<div class="t" style="top:1268.50px;font-size:28px;line-height:28px;color:#0d0d0d;left:546.60px;transform:scaleX(0.8993);transform-origin:left center;">APPLE.COM/BILL</div><div class="t" style="top:1268.50px;font-size:28px;line-height:28px;color:#0d0d0d;letter-spacing:-0.682px;left:760.00px;">08001076285</div><div class="t" style="top:1268.50px;font-size:28px;line-height:28px;color:#0d0d0d;left:933.79px;transform:scaleX(0.8537);transform-origin:left center;">IRL</div>
<div class="t" style="top:1268.50px;font-size:28px;line-height:28px;font-weight:700;color:#0d0d0d;letter-spacing:0.106px;right:694.22px;">£23.01</div>
<div class="abs" style="left:1217.7px;top:1278.9px;width:88.3px;height:2.7px;background:#0d0d0d"></div>
<div class="t" style="top:1268.50px;font-size:28px;line-height:28px;color:#0d0d0d;letter-spacing:-0.736px;left:1337.90px;">Payment</div>
<div class="own" style="top:1242px"></div><div class="av" style="top:1258px"></div>
<div class="t" style="top:1272.65px;font-size:22.5px;line-height:22.5px;color:#2b2f33;-webkit-text-stroke:0.4px currentColor;left:1598.39px;transform:scaleX(1.1148);transform-origin:left center;">MH</div>
<div class="t" style="top:1256.75px;font-size:22.5px;line-height:22.5px;color:#3b4046;-webkit-text-stroke:0.55px currentColor;left:1673.53px;transform:scaleX(1.0650);transform-origin:left center;">Heale</div>
<div class="t" style="top:1289.05px;font-size:22.5px;line-height:22.5px;color:#3b4046;-webkit-text-stroke:0.55px currentColor;left:1673.47px;transform:scaleX(1.1299);transform-origin:left center;">Matthew</div>
<div class="t" style="top:1268.50px;font-size:28px;line-height:28px;color:#0d0d0d;left:1865.64px;transform:scaleX(0.8599);transform-origin:left center;">OFFICE SU</div>
<div class="abs" style="left:1996.3px;top:1272px;width:2.6px;height:20px;background:#0d0d0d"></div>
<div class="hl" style="top:1340px"></div>
<div class="abs" style="left:0;top:1332px;width:2000px;height:110px;background:#fff"></div><div class="hl" style="top:1332px"></div>
<svg class="abs" style="left:65px;top:1368px" width="40" height="36" viewBox="505 1370 40 36"><path d="M524 1375.1V1398M512.4 1386.2L524 1397.8 535.6 1386.2" stroke="#b01848" stroke-width="3.6" fill="none"/></svg>
<svg class="abs" style="left:488px;top:1368px" width="40" height="36" viewBox="928 1370 40 36"><path d="M946 1401V1378M934.8 1389.6L946 1378.4 957.2 1389.6" stroke="#2a8066" stroke-width="3.6" fill="none"/></svg>
<div class="t" style="top:1372.50px;font-size:28px;line-height:28px;color:#0d0d0d;letter-spacing:0.537px;left:112.60px;">Amount</div><div class="t" style="top:1372.50px;font-size:28px;line-height:28px;color:#0d0d0d;left:219.24px;transform:scaleX(1.0632);transform-origin:left center;">out:</div>
<div class="t" style="top:1372.50px;font-size:28px;line-height:28px;font-weight:700;color:#0d0d0d;letter-spacing:0.491px;left:283.90px;">-£18,777.98</div>
<div class="t" style="top:1372.50px;font-size:28px;line-height:28px;color:#0d0d0d;letter-spacing:0.277px;left:535.40px;">Amount</div><div class="t" style="top:1372.50px;font-size:28px;line-height:28px;color:#0d0d0d;letter-spacing:0.304px;left:641.60px;">in:</div>
<div class="t" style="top:1372.50px;font-size:28px;line-height:28px;font-weight:700;color:#0d0d0d;letter-spacing:0.528px;left:688.40px;">+£4,101.00</div>
<div class="t" style="top:1372.50px;font-size:28px;line-height:28px;color:#0d0d0d;left:883.00px;transform:scaleX(0.9316);transform-origin:left center;">Taxable:</div>
<div class="t" style="top:1372.50px;font-size:28px;line-height:28px;font-weight:700;color:#0d0d0d;letter-spacing:-0.074px;left:997.50px;">£0.00</div>
<div class="t" style="top:1372.50px;font-size:28px;line-height:28px;color:#0d0d0d;left:1116.00px;transform:scaleX(0.9550);transform-origin:left center;">VAT:</div>
<div class="t" style="top:1372.50px;font-size:28px;line-height:28px;font-weight:700;color:#0d0d0d;letter-spacing:-0.049px;left:1185.70px;">£0.00</div>
<div class="t" style="top:1372.50px;font-size:28px;line-height:28px;color:#0d0d0d;left:1722.50px;transform:scaleX(0.9483);transform-origin:left center;">Transactions:</div>
<div class="t" style="top:1372.50px;font-size:28px;line-height:28px;font-weight:700;color:#0d0d0d;letter-spacing:0.328px;left:1888.20px;">452</div></div><div id="rail"><div class="abs" style="left:20px;top:46px;width:80px;height:80px;border-radius:50%;background:#fdd681"></div>
<div class="t" style="top:69.50px;font-size:36px;line-height:36px;color:#1f2a2e;letter-spacing:2.002px;left:31.00px;">HM</div>
<div class="caret" style="left:51px;top:146.5px;border-left-width:9px;border-right-width:9px;border-top:10px solid #b0b2b5"></div>
<div class="abs" style="left:20px;top:646px;width:80px;height:2px;background:#adafb3"></div>
<svg class="abs" style="left:36.00px;top:258.00px" width="48.00" height="48.00" viewBox="0 0 24 24"><path d="M20 4H4c-1.100 0-1.990.9-1.990 2L2 18c0 1.100.9 2 2 2h16c1.100 0 2-.9 2-2V6c0-1.100-.9-2-2-2zm0 14H4V8l8 5 8-5v10zm-8-7L4 6h16l-8 5z" fill="#73767a"/></svg>
<svg class="abs" style="left:36.00px;top:354.00px" width="48.00" height="48.00" viewBox="0 0 24 24"><path d="M17.650 6.350C16.200 4.900 14.210 4 12 4c-4.420 0-7.990 3.580-7.990 8s3.570 8 7.990 8c3.730 0 6.840-2.550 7.730-6h-2.080c-.82 2.330-3.040 4-5.650 4-3.310 0-6-2.690-6-6s2.690-6 6-6c1.660 0 3.140.69 4.220 1.780L13 11h7V4l-2.350 2.350z" fill="#73767a"/></svg>
<svg class="abs" style="left:36.00px;top:450.00px" width="48.00" height="48.00" viewBox="0 0 24 24"><path d="M4 4h16v12H5.170L4 17.170V4m0-2c-1.100 0-1.990.9-1.990 2L2 22l4-4h14c1.100 0 2-.9 2-2V4c0-1.100-.9-2-2-2H4zm2 9h9v2H6v-2zm0-4h12v2H6V7z" fill="#73767a"/></svg>
<svg class="abs" style="left:36.00px;top:546.00px" width="48.00" height="48.00" viewBox="0 0 24 24"><path d="M11 18h2v-2h-2v2zm1-16C6.480 2 2 6.480 2 12s4.480 10 10 10 10-4.480 10-10S17.520 2 12 2zm0 18c-4.410 0-8-3.590-8-8s3.590-8 8-8 8 3.590 8 8-3.590 8-8 8zm0-14c-2.210 0-4 1.790-4 4h2c0-1.100.9-2 2-2s2 .9 2 2c0 2-3 1.750-3 5h2c0-2.250 3-2.500 3-5 0-2.210-1.790-4-4-4z" fill="#73767a"/></svg>
<svg class="abs" style="left:36px;top:700px" width="48" height="48" viewBox="2476 702 48 48"><path d="M2500 706.6L2518.2 715.2V719.6H2481.8V715.2z" fill="#ee6a10"/><path d="M2500 711.4L2513 716.7H2487z" fill="#fdd7ac"/><rect x="2486.2" y="719.5" width="27.8" height="15.8" fill="#fdd7ac"/><rect x="2486.2" y="719.5" width="3.4" height="15.8" fill="#ee6a10"/><rect x="2494.4" y="719.5" width="3.4" height="15.8" fill="#ee6a10"/><rect x="2502.4" y="719.5" width="3.4" height="15.8" fill="#ee6a10"/><rect x="2510.6" y="719.5" width="3.4" height="15.8" fill="#ee6a10"/><path d="M2483.7 735.2H2516.5L2520 744.6H2480.2z" fill="#ee6a10"/><rect x="2485.4" y="738.9" width="29.4" height="2.3" fill="#fdd7ac"/></svg></div><div class="abs" style="left:834px;top:400px;width:282px;height:258px;border:8px solid #7560e0;border-radius:16px;box-shadow:0 2px 6px rgba(120,110,200,0.16);background:#fff;overflow:hidden"><div style="position:absolute;left:0;top:0;width:100%;height:80px;background:#f5f5f6"></div><div style="position:absolute;left:0;top:0;width:266px;height:242px;border:1.5px solid #e3e3ea;border-radius:8px"></div></div>
<div class="t" style="top:430.30px;font-size:28px;line-height:28px;color:#2c3135;left:939.45px;transform:scaleX(0.8459);transform-origin:left center;">GBP</div>
<div class="t" style="top:510.30px;font-size:28px;line-height:28px;color:#2c3135;left:939.10px;transform:scaleX(0.8480);transform-origin:left center;">EUR</div>
<div class="t" style="top:590.30px;font-size:28px;line-height:28px;color:#2c3135;left:938.98px;transform:scaleX(0.9124);transform-origin:left center;">USD</div>
<svg class="abs" style="left:1105px;top:560px" width="4" height="8" viewBox="1105 560 4 8"><path d="M1108 561.6L1105.8 564 1108 566.4z" fill="#111"/></svg>
<svg class="abs" style="left:876px;top:424px" width="40" height="40" viewBox="0 0 40 40"><defs><clipPath id="cuk"><circle cx="20" cy="20" r="20"/></clipPath></defs><g clip-path="url(#cuk)"><rect width="40" height="40" fill="#0b4ea2"/><path d="M-2 -2L42 42M42 -2L-2 42" stroke="#fff" stroke-width="8.5"/><path d="M-2 -0.6L19 20.4M42 0.6L21 21.6M42 40.6L21 19.6M-2 39.4L19 18.4" stroke="#c8102e" stroke-width="1.9"/><path d="M20 0V40M0 20H40" stroke="#fff" stroke-width="11.4"/><path d="M20 0V40M0 20H40" stroke="#d80027" stroke-width="6.2"/></g></svg>
<svg class="abs" style="left:876px;top:504px" width="40" height="40" viewBox="0 0 40 40"><defs><clipPath id="ceu"><circle cx="20" cy="20" r="20"/></clipPath></defs><g clip-path="url(#ceu)"><rect width="40" height="40" fill="#0a52b4"/><polygon points="29.60,17.70 30.17,19.22 31.79,19.29 30.52,20.30 30.95,21.86 29.60,20.97 28.25,21.86 28.68,20.30 27.41,19.29 29.03,19.22" fill="#ffda44"/><polygon points="26.79,24.49 27.36,26.01 28.98,26.08 27.71,27.09 28.14,28.65 26.79,27.75 25.44,28.65 25.87,27.09 24.60,26.08 26.22,26.01" fill="#ffda44"/><polygon points="20.00,27.30 20.57,28.82 22.19,28.89 20.92,29.90 21.35,31.46 20.00,30.57 18.65,31.46 19.08,29.90 17.81,28.89 19.43,28.82" fill="#ffda44"/><polygon points="13.21,24.49 13.78,26.01 15.40,26.08 14.13,27.09 14.56,28.65 13.21,27.75 11.86,28.65 12.29,27.09 11.02,26.08 12.64,26.01" fill="#ffda44"/><polygon points="10.40,17.70 10.97,19.22 12.59,19.29 11.32,20.30 11.75,21.86 10.40,20.97 9.05,21.86 9.48,20.30 8.21,19.29 9.83,19.22" fill="#ffda44"/><polygon points="13.21,10.91 13.78,12.43 15.40,12.50 14.13,13.51 14.56,15.07 13.21,14.18 11.86,15.07 12.29,13.51 11.02,12.50 12.64,12.43" fill="#ffda44"/><polygon points="20.00,8.10 20.57,9.62 22.19,9.69 20.92,10.70 21.35,12.26 20.00,11.37 18.65,12.26 19.08,10.70 17.81,9.69 19.43,9.62" fill="#ffda44"/><polygon points="26.79,10.91 27.36,12.43 28.98,12.50 27.71,13.51 28.14,15.07 26.79,14.18 25.44,15.07 25.87,13.51 24.60,12.50 26.22,12.43" fill="#ffda44"/></g></svg>
<svg class="abs" style="left:876px;top:584px" width="40" height="40" viewBox="0 0 40 40"><defs><clipPath id="cus"><circle cx="20" cy="20" r="20"/></clipPath></defs><g clip-path="url(#cus)"><rect width="40" height="40" fill="#f3f3f3"/><rect x="0" y="5" width="40" height="5" fill="#d80027"/><rect x="0" y="15" width="40" height="5" fill="#d80027"/><rect x="0" y="25" width="40" height="5" fill="#d80027"/><rect x="0" y="35" width="40" height="5" fill="#d80027"/><rect x="0" y="0" width="20" height="20" fill="#0b4ea2"/><polygon points="8.60,1.90 9.07,3.15 10.41,3.21 9.36,4.05 9.72,5.34 8.60,4.60 7.48,5.34 7.84,4.05 6.79,3.21 8.13,3.15" fill="#fff"/><polygon points="8.60,7.70 9.07,8.95 10.41,9.01 9.36,9.85 9.72,11.14 8.60,10.40 7.48,11.14 7.84,9.85 6.79,9.01 8.13,8.95" fill="#fff"/><polygon points="8.60,13.50 9.07,14.75 10.41,14.81 9.36,15.65 9.72,16.94 8.60,16.20 7.48,16.94 7.84,15.65 6.79,14.81 8.13,14.75" fill="#fff"/><polygon points="15.60,1.90 16.07,3.15 17.41,3.21 16.36,4.05 16.72,5.34 15.60,4.60 14.48,5.34 14.84,4.05 13.79,3.21 15.13,3.15" fill="#fff"/><polygon points="15.60,7.70 16.07,8.95 17.41,9.01 16.36,9.85 16.72,11.14 15.60,10.40 14.48,11.14 14.84,9.85 13.79,9.01 15.13,8.95" fill="#fff"/><polygon points="15.60,13.50 16.07,14.75 17.41,14.81 16.36,15.65 16.72,16.94 15.60,16.20 14.48,16.94 14.84,15.65 13.79,14.81 15.13,14.75" fill="#fff"/><polygon points="1.60,13.50 2.07,14.75 3.41,14.81 2.36,15.65 2.72,16.94 1.60,16.20 0.48,16.94 0.84,15.65 -0.21,14.81 1.13,14.75" fill="#fff"/><polygon points="2.60,7.70 3.07,8.95 4.41,9.01 3.36,9.85 3.72,11.14 2.60,10.40 1.48,11.14 1.84,9.85 0.79,9.01 2.13,8.95" fill="#fff"/></g></svg>
<svg class="abs" style="left:1026.40px;top:424.40px" width="48.00" height="48.00" viewBox="0 0 24 24"><path d="M9 16.170L4.830 12l-1.420 1.410L9 19 21 7l-1.410-1.410z" fill="#33363f"/></svg>
<svg class="abs" style="left:924px;top:348px" width="76" height="92" viewBox="924 348 76 92"><defs><linearGradient id="cg" x1="0" y1="0" x2="0.8" y2="1"><stop offset="0" stop-color="#454a58"/><stop offset="0.45" stop-color="#262a3a"/><stop offset="1" stop-color="#11121c"/></linearGradient></defs><path d="M935.1 358.4L990.7 403.5 958 405.6 935.8 429.6z" fill="none" stroke="#85868c" stroke-width="9.6" stroke-linejoin="round"/><path d="M935.1 358.4L990.7 403.5 958 405.6 935.8 429.6z" fill="url(#cg)" stroke="#fff" stroke-width="8.2" stroke-linejoin="round" paint-order="stroke"/><path d="M935.1 358.4L990.7 403.5 958 405.6 935.8 429.6z" fill="url(#cg)" stroke="url(#cg)" stroke-width="1.6" stroke-linejoin="round"/></svg></body></html>
